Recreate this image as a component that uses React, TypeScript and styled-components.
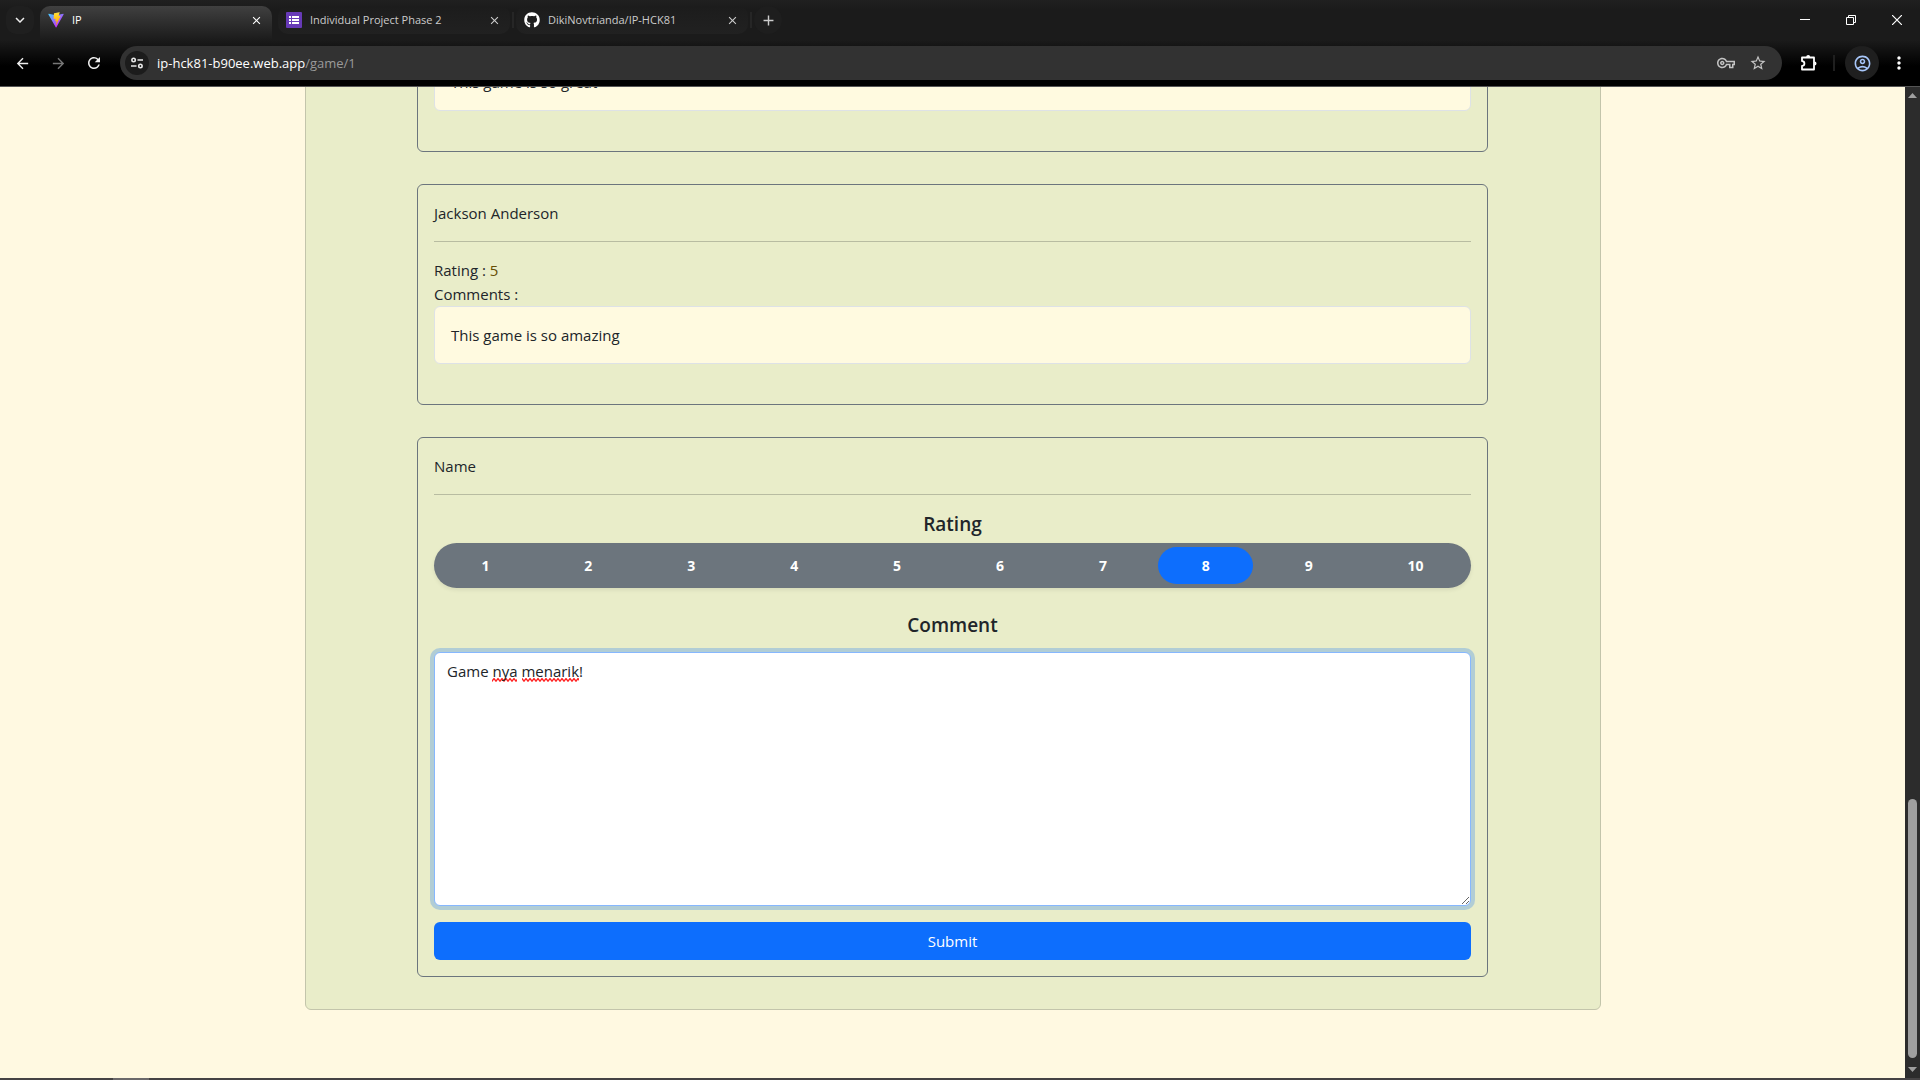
import React, { useState } from "react";
import styled, { createGlobalStyle, css } from "styled-components";
import {
  MdAdd,
  MdArrowBack,
  MdArrowForward,
  MdClose,
  MdKeyboardArrowDown,
  MdMoreVert,
  MdOutlineAccountCircle,
  MdOutlineVpnKey,
  MdRefresh,
  MdStarBorder,
} from "react-icons/md";
import { FaGithub } from "react-icons/fa";

const colors = {
  page: "#fff9e1",
  panel: "#e9edc9",
  box: "#fffae0",
  text: "#212529",
  slate: "#6c757d",
  primary: "#0d6efd",
};

const GlobalStyle = createGlobalStyle`
  *, *::before, *::after { box-sizing: border-box; }
  body {
    margin: 0;
    background: ${colors.page};
    color: ${colors.text};
    font: 15px/24px "Segoe UI", "Open Sans", "Noto Sans", sans-serif;
  }
  button, input, textarea { font: inherit; color: inherit; }
  button { border: 0; background: none; padding: 0; cursor: pointer; }
  h2, p { margin: 0; }
`;

const Window = styled.div`
  height: 100vh;
  display: flex;
  flex-direction: column;
  overflow: hidden;
`;

/* ---------- Browser chrome ---------- */

const Chrome = styled.header`
  flex: none;
  background: linear-gradient(#202020, #1b1b1b 10px, #1b1b1b 40px, #000 66px);
  border-bottom: 1px solid #555;
`;

const TabStrip = styled.div`
  display: flex;
  align-items: center;
  height: 40px;
  padding: 0 0 0 6px;
`;

const RoundButton = styled.button<{ $muted?: boolean }>`
  flex: none;
  display: grid;
  place-items: center;
  width: 28px;
  height: 28px;
  border-radius: 10px;
  color: ${(p) => (p.$muted ? "#777" : "#eee")};
`;

const MenuButton = styled(RoundButton)`
  background: #1f1f1f;
  margin-right: 6px;
`;

const NewTabButton = styled(RoundButton)`
  border-radius: 50%;
  background: #1e1e1e;
  color: #ccc;
`;

const Tab = styled.div<{ $active?: boolean }>`
  flex: 0 1 232px;
  min-width: 0;
  display: flex;
  align-items: center;
  gap: 8px;
  height: 28px;
  padding: 0 8px;
  border-radius: 10px;
  color: #ccc;
  font-size: 11px;
  line-height: 16px;
  background: linear-gradient(#1c1c1c, #212121);
  ${(p) =>
    p.$active &&
    css`
      align-self: flex-end;
      height: 34px;
      padding-bottom: 6px;
      margin-right: 6px;
      border-radius: 10px 10px 0 0;
      color: #fff;
      background: linear-gradient(#404040, #1b1b1b);
    `}
`;

const TabTitle = styled.span`
  flex: 1;
  overflow: hidden;
  white-space: nowrap;
`;

const TabClose = styled.button`
  display: grid;
  place-items: center;
  width: 16px;
  height: 16px;
`;

const Divider = styled.span`
  flex: none;
  width: 2px;
  height: 16px;
  margin: 0 2px;
  background: #262626;
`;

const WindowControls = styled.div`
  display: flex;
  margin-left: auto;
  color: #fff;
`;

const WindowControl = styled.button`
  display: grid;
  place-items: center;
  width: 46px;
  height: 40px;
`;

const Toolbar = styled.div`
  display: flex;
  align-items: center;
  gap: 8px;
  height: 46px;
  padding: 0 13px 0 8px;
`;

const AddressBar = styled.div`
  flex: 1;
  display: flex;
  align-items: center;
  gap: 8px;
  height: 34px;
  margin: 0 5px 0 4px;
  padding: 0 12px 0 5px;
  border-radius: 17px;
  background: #323232;
  color: #c4c4c4;
`;

const SiteInfo = styled.button`
  display: grid;
  place-items: center;
  width: 24px;
  height: 24px;
  border-radius: 50%;
  background: #1c1c1c;
  color: #e8e8e8;
`;

const Url = styled.div`
  flex: 1;
  font-size: 13px;
  line-height: 20px;
  color: #9a9a9a;
`;

const Host = styled.span`
  color: #fff;
`;

const BarIcon = styled.button`
  display: grid;
  place-items: center;
  width: 24px;
  height: 24px;
`;

const ToolbarDivider = styled.span`
  width: 2px;
  height: 16px;
  background: #1f1f1f;
`;

const Profile = styled.button`
  display: grid;
  place-items: center;
  width: 34px;
  height: 34px;
  border-radius: 50%;
  background: #1f1f1f;
  color: #a8c7fa;
`;

const MoreButton = styled.button`
  display: grid;
  place-items: center;
  width: 18px;
  height: 28px;
  color: #fff;
`;

const ToolbarEnd = styled.div`
  display: flex;
  align-items: center;
  gap: 10px;
`;

/* ---------- Viewport and scrollbar ---------- */

const Viewport = styled.div`
  flex: 1;
  min-height: 0;
  display: flex;
`;

const Page = styled.main`
  flex: 1;
  min-width: 0;
  display: flex;
  flex-direction: column;
  justify-content: flex-end;
  align-items: center;
  overflow: hidden;
  padding: 0 12px 68px;
`;

const Scrollbar = styled.div`
  flex: none;
  width: 15px;
  display: flex;
  flex-direction: column;
  align-items: center;
  justify-content: space-between;
  padding: 6px 0;
  background: #2c2c2c;
`;

const ScrollArrow = styled.svg`
  display: block;
  width: 9px;
  height: 5px;
  fill: #9f9f9f;
`;

const Track = styled.div`
  flex: 1;
  display: flex;
  align-items: flex-end;
  padding-bottom: 9px;
`;

const Thumb = styled.div`
  width: 9px;
  height: 27%;
  border-radius: 5px;
  background: #9f9f9f;
`;

const Taskbar = styled.footer`
  flex: none;
  display: flex;
  height: 2px;
  padding-left: 113px;
  background: #454344;
`;

const TaskbarItem = styled.span`
  width: 36px;
  background: #6b696a;
`;

/* ---------- Reviews ---------- */

const Panel = styled.section`
  flex: none;
  width: 100%;
  max-width: 1296px;
  display: flex;
  flex-direction: column;
  align-items: center;
  gap: 32px;
  padding: 32px 16px;
  background: ${colors.panel};
  border: 1px solid #c3c5ab;
  border-radius: 6px;
`;

const cardStyles = css`
  width: 100%;
  max-width: 1071px;
  padding: 16px;
  border: 1px solid ${colors.slate};
  border-radius: 6px;
`;

const Card = styled.article`
  ${cardStyles}
  padding-bottom: 40px;
`;

const FormCard = styled.form`
  ${cardStyles}
`;

const Rule = styled.hr`
  margin: 16px 0;
  border: 0;
  border-top: 1px solid #b8bca1;
`;

const Score = styled.span`
  color: #664d03;
`;

const CommentBox = styled.p`
  padding: 16px;
  border: 1px solid #dee2e6;
  border-radius: 6px;
  background: ${colors.box};
`;

const headingStyles = css`
  display: block;
  font-size: 19px;
  line-height: 26px;
  font-weight: 600;
  text-align: center;
`;

const Heading = styled.h2`
  ${headingStyles}
`;

const FieldLabel = styled.label`
  ${headingStyles}
`;

const RatingBar = styled.div`
  display: flex;
  gap: 8px;
  margin: 6px 0 24px;
  padding: 4px;
  border-radius: 23px;
  background: ${colors.slate};
  box-shadow: 0 2px 4px rgba(0, 0, 0, 0.08);
`;

const RatingInput = styled.input`
  position: absolute;
  opacity: 0;
  pointer-events: none;
`;

const RatingOption = styled.label`
  flex: 1 1 auto;
  padding: 8px 16px;
  border-radius: 19px;
  color: #fff;
  font-size: 14px;
  line-height: 21px;
  font-weight: 700;
  text-align: center;
  cursor: pointer;
  &:has(input:checked) {
    background: ${colors.primary};
  }
`;

const squiggle = `url("data:image/svg+xml,%3Csvg xmlns='http://www.w3.org/2000/svg' width='4' height='4' viewBox='0 0 4 4'%3E%3Cpath d='M-1 0.5L1 3.2L3 0.5L5 3.2' fill='none' stroke='%23f22' stroke-width='1.3'/%3E%3C/svg%3E")`;

const CommentInput = styled.textarea`
  display: block;
  width: 100%;
  margin: 14px 0 16px;
  padding: 6px 12px;
  border: 1px solid #86b7fe;
  border-radius: 6px;
  outline: 0;
  box-shadow: 0 0 0 4px rgba(13, 110, 253, 0.25);
  background-color: #fff;
  /* spelling marks under the second and third word */
  background-image:
    linear-gradient(#fff, #fff),
    linear-gradient(#fff, #fff),
    linear-gradient(#fff, #fff),
    ${squiggle};
  background-size: 57px 5px, 5px 5px, 100% 5px, 4px 4px;
  background-position: 0 25px, 82px 25px, 144px 25px, 0 25px;
  background-repeat: no-repeat, no-repeat, no-repeat, repeat-x;
  resize: vertical;
`;

const SubmitButton = styled.button`
  display: block;
  width: 100%;
  padding: 7px 12px;
  border-radius: 6px;
  background: ${colors.primary};
  color: #fff;
`;

/* ---------- Icons ---------- */

const ViteLogo = () => (
  <svg width="16" height="16" viewBox="0 0 410 404" aria-hidden="true">
    <defs>
      <linearGradient id="viteBody" x1="6" y1="33" x2="235" y2="344" gradientUnits="userSpaceOnUse">
        <stop stopColor="#41d1ff" />
        <stop offset="1" stopColor="#bd34fe" />
      </linearGradient>
      <linearGradient id="viteBolt" x1="194" y1="9" x2="236" y2="293" gradientUnits="userSpaceOnUse">
        <stop stopColor="#ffea83" />
        <stop offset="0.08" stopColor="#ffdd35" />
        <stop offset="1" stopColor="#ffa800" />
      </linearGradient>
    </defs>
    <path
      fill="url(#viteBody)"
      d="M399.641 59.525L215.643 388.545C211.844 395.338 202.084 395.378 198.228 388.618L10.582 59.556C6.381 52.19 12.68 43.267 21.028 44.759L205.223 77.682C206.398 77.892 207.601 77.89 208.776 77.676L389.119 44.806C397.439 43.289 403.768 52.143 399.641 59.525Z"
    />
    <path
      fill="url(#viteBolt)"
      d="M292.965 1.574L156.801 28.255C154.563 28.694 152.906 30.59 152.771 32.866L144.395 174.33C144.198 177.662 147.258 180.248 150.51 179.498L188.42 170.749C191.967 169.931 195.172 173.055 194.443 176.622L183.18 231.775C182.422 235.487 185.907 238.661 189.532 237.56L212.947 230.446C216.577 229.344 220.065 232.527 219.297 236.242L201.398 322.875C200.278 328.294 207.486 331.249 210.492 326.603L212.5 323.5L323.454 102.072C325.312 98.365 322.108 94.137 318.036 94.923L279.014 102.454C275.347 103.161 272.227 99.746 273.262 96.158L298.731 7.867C299.767 4.273 296.636 0.855 292.965 1.574Z"
    />
  </svg>
);

const FormsLogo = () => (
  <svg width="16" height="16" viewBox="0 0 16 16" aria-hidden="true">
    <rect width="16" height="16" rx="1" fill="#673ab7" />
    <path fill="#fff" d="M3 4h2v2H3zM6 4h7v2H6zM3 7h2v2H3zM6 7h7v2H6zM3 10h2v2H3zM6 10h7v2H6z" />
  </svg>
);

const TuneIcon = () => (
  <svg width="14" height="14" viewBox="0 0 14 14" fill="none" stroke="currentColor" strokeWidth="1.6" aria-hidden="true">
    <circle cx="3.6" cy="4" r="1.7" />
    <path d="M7.5 4h5.5M1 10h5.5" />
    <circle cx="10.4" cy="10" r="1.7" />
  </svg>
);

const PuzzleIcon = () => (
  <svg width="18" height="18" viewBox="0 0 18 18" aria-hidden="true">
    <path
      d="M2 3.5h12v12H2v-3.6a2.4 2.4 0 0 0 0-4.8z"
      fill="none"
      stroke="#fff"
      strokeWidth="1.8"
      strokeLinejoin="round"
    />
    <path d="M6.2 3a2 2 0 0 1 4 0zM14.5 7.5a2 2 0 0 1 0 4z" fill="#fff" />
  </svg>
);

const MinimizeIcon = () => (
  <svg width="10" height="10" viewBox="0 0 10 10" aria-hidden="true">
    <path d="M0 4h10v1H0z" fill="currentColor" />
  </svg>
);

const RestoreIcon = () => (
  <svg width="10" height="10" viewBox="0 0 10 10" fill="none" stroke="currentColor" aria-hidden="true">
    <path d="M.5 2.5h7v7h-7zM2.5 2.5v-2h7v7h-2" />
  </svg>
);

const CloseIcon = () => (
  <svg width="10" height="10" viewBox="0 0 10 10" fill="none" stroke="currentColor" strokeWidth="1.2" aria-hidden="true">
    <path d="M0 0l10 10M10 0L0 10" />
  </svg>
);

/* ---------- Components ---------- */

type BrowserTabProps = { icon: React.ReactNode; title: string; active?: boolean };

const BrowserTab = ({ icon, title, active }: BrowserTabProps) => (
  <Tab $active={active}>
    {icon}
    <TabTitle>{title}</TabTitle>
    <TabClose type="button" aria-label="Close tab">
      <MdClose size={13} />
    </TabClose>
  </Tab>
);

const BrowserChrome = () => (
  <Chrome>
    <TabStrip>
      <MenuButton type="button" aria-label="Search tabs">
        <MdKeyboardArrowDown size={18} />
      </MenuButton>
      <BrowserTab active icon={<ViteLogo />} title="IP" />
      <BrowserTab icon={<FormsLogo />} title="Individual Project Phase 2" />
      <Divider />
      <BrowserTab icon={<FaGithub size={16} color="#fff" />} title="DikiNovtrianda/IP-HCK81" />
      <Divider />
      <NewTabButton type="button" aria-label="New tab">
        <MdAdd size={17} />
      </NewTabButton>
      <WindowControls>
        <WindowControl type="button" aria-label="Minimize">
          <MinimizeIcon />
        </WindowControl>
        <WindowControl type="button" aria-label="Restore">
          <RestoreIcon />
        </WindowControl>
        <WindowControl type="button" aria-label="Close">
          <CloseIcon />
        </WindowControl>
      </WindowControls>
    </TabStrip>
    <Toolbar>
      <RoundButton type="button" aria-label="Back">
        <MdArrowBack size={17} />
      </RoundButton>
      <RoundButton type="button" aria-label="Forward" $muted>
        <MdArrowForward size={17} />
      </RoundButton>
      <RoundButton type="button" aria-label="Reload">
        <MdRefresh size={18} />
      </RoundButton>
      <AddressBar>
        <SiteInfo type="button" aria-label="Site information">
          <TuneIcon />
        </SiteInfo>
        <Url>
          <Host>ip-hck81-b90ee.web.app</Host>/game/1
        </Url>
        <BarIcon type="button" aria-label="Passwords">
          <MdOutlineVpnKey size={18} />
        </BarIcon>
        <BarIcon type="button" aria-label="Bookmark">
          <MdStarBorder size={18} />
        </BarIcon>
      </AddressBar>
      <ToolbarEnd>
        <RoundButton type="button" aria-label="Extensions">
          <PuzzleIcon />
        </RoundButton>
        <ToolbarDivider />
        <Profile type="button" aria-label="Profile">
          <MdOutlineAccountCircle size={19} />
        </Profile>
        <MoreButton type="button" aria-label="More">
          <MdMoreVert size={20} />
        </MoreButton>
      </ToolbarEnd>
    </Toolbar>
  </Chrome>
);

type ReviewProps = { author?: string; rating?: number; comment: string };

const Review = ({ author, rating, comment }: ReviewProps) => (
  <Card>
    {author && (
      <>
        <div>{author}</div>
        <Rule />
        <div>
          Rating : <Score>{rating}</Score>
        </div>
        <div>Comments :</div>
      </>
    )}
    <CommentBox>{comment}</CommentBox>
  </Card>
);

const ratings = [1, 2, 3, 4, 5, 6, 7, 8, 9, 10];

const ReviewForm = () => {
  const [rating, setRating] = useState(8);
  const [comment, setComment] = useState("Game nya menarik!");
  return (
    <FormCard onSubmit={(e) => e.preventDefault()}>
      <div>Name</div>
      <Rule />
      <Heading id="rating-label">Rating</Heading>
      <RatingBar role="radiogroup" aria-labelledby="rating-label">
        {ratings.map((value) => (
          <RatingOption key={value}>
            <RatingInput
              type="radio"
              name="rating"
              value={value}
              checked={rating === value}
              onChange={() => setRating(value)}
            />
            {value}
          </RatingOption>
        ))}
      </RatingBar>
      <FieldLabel htmlFor="comment">Comment</FieldLabel>
      <CommentInput id="comment" rows={10} value={comment} onChange={(e) => setComment(e.target.value)} />
      <SubmitButton type="submit">Submit</SubmitButton>
    </FormCard>
  );
};

export default function App() {
  return (
    <Window>
      <GlobalStyle />
      <BrowserChrome />
      <Viewport>
        <Page>
          <Panel>
            <Review comment="This game is so great" />
            <Review author="Jackson Anderson" rating={5} comment="This game is so amazing" />
            <ReviewForm />
          </Panel>
        </Page>
        <Scrollbar aria-hidden="true">
          <ScrollArrow viewBox="0 0 9 5">
            <path d="M4.5 0L9 5H0z" />
          </ScrollArrow>
          <Track>
            <Thumb />
          </Track>
          <ScrollArrow viewBox="0 0 9 5">
            <path d="M4.5 5L0 0h9z" />
          </ScrollArrow>
        </Scrollbar>
      </Viewport>
      <Taskbar>
        <TaskbarItem />
      </Taskbar>
    </Window>
  );
}
